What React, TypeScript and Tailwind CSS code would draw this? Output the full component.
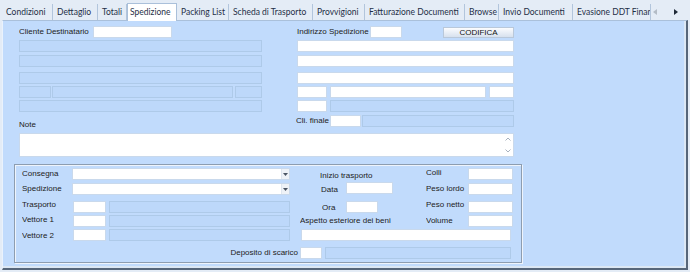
import React from 'react';

const tabs = [
  { label: 'Condizioni', w: 'w-[51px]' },
  { label: 'Dettaglio', w: 'w-[45px]' },
  { label: 'Totali', w: 'w-[29px]' },
  { label: 'Spedizione', w: 'w-[50px]', active: true },
  { label: 'Packing List', w: 'w-[52px]' },
  { label: 'Scheda di Trasporto', w: 'w-[84px]' },
  { label: 'Provvigioni', w: 'w-[52px]' },
  { label: 'Fatturazione Documenti', w: 'w-[100px]' },
  { label: 'Browse', w: 'w-[34px]' },
  { label: 'Invio Documenti', w: 'w-[74px]' },
  { label: 'Evasione DDT Finanzi', w: 'w-[78px]' },
];

// --- Small field helpers ---
const Input = ({ className = '' }: { className?: string }) => (
  <div className={`h-[12px] bg-white border border-[#c9d9ec] ${className}`}></div>
);

const Disabled = ({ className = '' }: { className?: string }) => (
  <div className={`h-[12px] bg-[#bdd8fa] border border-[#aecae9] ${className}`}></div>
);

const Label = ({ children, className = '' }: { children: React.ReactNode; className?: string }) => (
  <div className={`shrink-0 overflow-hidden whitespace-nowrap text-[8px] leading-[12px] text-[#222] ${className}`}>
    {children}
  </div>
);

const Combo = () => (
  <div className="h-[12px] w-[218px] bg-white border border-[#c9d9ec] flex justify-end">
    <div className="w-[8px] h-full bg-[#eef2f7] border-l border-[#dfe6ef] flex items-center justify-center">
      <svg width="5" height="3" viewBox="0 0 5 3">
        <path d="M0 0h5L2.5 3z" fill="#4b5563" />
      </svg>
    </div>
  </div>
);

export default function App() {
  return (
    <div
      className="w-[690px] h-[272px] bg-[#e4ecf6] overflow-hidden"
      style={{ fontFamily: '"Liberation Sans", Arial, sans-serif' }}
    >
      {/* ==========================
          TAB STRIP
      ========================== */}
      <div className="h-[20px] flex items-end pl-[2px] relative">
        {tabs.map((t) => (
          <div
            key={t.label}
            className={`${t.w} shrink-0 overflow-hidden whitespace-nowrap text-[8.5px] text-[#1f2f46] ${
              t.active
                ? 'h-[18px] -mb-px z-10 bg-white border border-b-0 border-[#aac0da] pl-[2px] leading-[16px]'
                : 'h-[16px] border-r border-[#b2c5dc] pl-[4px] leading-[16px]'
            }`}
            style={{ fontFamily: 'Lato, "Open Sans", sans-serif' }}
          >
            {t.label}
          </div>
        ))}
        <div className="flex items-center gap-[17px] h-[16px] ml-[2px]">
          <svg width="4" height="6" viewBox="0 0 4 6">
            <path d="M4 0v6L0 3z" fill="#b4bcc6" />
          </svg>
          <svg width="4" height="6" viewBox="0 0 4 6">
            <path d="M0 0v6l4-3z" fill="#1f2937" />
          </svg>
        </div>
      </div>

      {/* ==========================
          PANEL
      ========================== */}
      <div className="ml-[2px] w-[686px] h-[250px] bg-[#c1dbfc] border-t border-t-[#aac0da] border-l border-l-[#eaf2fc] border-r-2 border-r-[#56667a] border-b-2 border-b-[#56667a] shadow-[inset_-2px_-2px_0_#dbe7f4] pt-[5px]">
        {/* Top section: two columns */}
        <div className="flex">
          {/* Left column */}
          <div className="ml-[16px] w-[243px] flex flex-col">
            <div className="flex h-[12px]">
              <Label className="w-[74px]">Cliente Destinatario</Label>
              <Input className="w-[79px]" />
            </div>
            <Disabled className="mt-[2px] w-[243px]" />
            <Disabled className="mt-[3px] w-[243px]" />
            <Disabled className="mt-[5px] w-[243px]" />
            <div className="mt-[2px] flex">
              <Disabled className="w-[32px]" />
              <Disabled className="ml-[1px] w-[181px]" />
              <Disabled className="ml-[2px] w-[27px]" />
            </div>
            <Disabled className="mt-[2px] w-[243px]" />
          </div>

          {/* Right column */}
          <div className="ml-[35px] w-[217px] flex flex-col">
            <div className="flex h-[12px]">
              <Label className="w-[73px]">Indirizzo Spedizione</Label>
              <Input className="w-[32px]" />
              <button className="ml-[41px] mt-[1px] w-[71px] h-[11px] bg-gradient-to-b from-[#fbfcfe] to-[#d7e1ee] border border-[#b9c8da] text-[8px] leading-[9px] text-[#111]">
                CODIFICA
              </button>
            </div>
            <Input className="mt-[2px] w-[217px]" />
            <Input className="mt-[3px] w-[217px]" />
            <Input className="mt-[5px] w-[217px]" />
            <div className="mt-[2px] flex">
              <Input className="w-[30px]" />
              <Input className="ml-[3px] w-[156px]" />
              <Input className="ml-[3px] w-[25px]" />
            </div>
            <div className="mt-[2px] flex">
              <Input className="w-[30px]" />
              <Disabled className="ml-[3px] w-[184px]" />
            </div>
          </div>
        </div>

        {/* Note / Cli. finale */}
        <div className="mt-[3px] flex h-[18px]">
          <div className="ml-[16px] w-[243px]">
            <Label className="mt-[4px]">Note</Label>
          </div>
          <div className="ml-[34px] flex items-start">
            <Label className="w-[34px]">Cli. finale</Label>
            <Input className="w-[31px]" />
            <Disabled className="ml-[1px] w-[152px]" />
          </div>
        </div>

        {/* Note textarea */}
        <div className="ml-[16px] w-[495px] h-[24px] bg-white border border-[#c9d9ec] flex justify-end">
          <div className="w-[10px] h-full flex flex-col items-center justify-between py-[3px]">
            <svg width="6" height="4" viewBox="0 0 6 4">
              <path d="M0.5 3.5L3 1l2.5 2.5" stroke="#a8b2bf" fill="none" />
            </svg>
            <svg width="6" height="4" viewBox="0 0 6 4">
              <path d="M0.5 0.5L3 3l2.5-2.5" stroke="#a8b2bf" fill="none" />
            </svg>
          </div>
        </div>

        {/* ==========================
            GROUP BOX
        ========================== */}
        <div className="mt-[7px] ml-[11px] w-[508px] h-[99px] border border-[#8d9db0] shadow-[1px_1px_0_#eef4fc,inset_1px_1px_0_#eef4fc] pt-[3px] flex flex-col">
          {/* Row A */}
          <div className="flex h-[12px]">
            <Label className="ml-[7px] w-[50px]">Consegna</Label>
            <Combo />
            <Label className="ml-[30px] w-[60px] mt-[2px]">Inizio trasporto</Label>
            <Label className="ml-[46px] w-[42px] -mt-[1px]">Colli</Label>
            <Input className="w-[45px]" />
          </div>

          {/* Row B */}
          <div className="mt-[3px] flex h-[12px]">
            <Label className="ml-[7px] w-[50px]">Spedizione</Label>
            <Combo />
            <Label className="ml-[31px] w-[25px] mt-[1px]">Data</Label>
            <Input className="w-[47px] -mt-[1px]" />
            <Label className="ml-[33px] w-[42px]">Peso lordo</Label>
            <Input className="w-[45px]" />
          </div>

          {/* Row C */}
          <div className="mt-[6px] flex h-[12px]">
            <Label className="ml-[7px] w-[51px] -mt-[2px]">Trasporto</Label>
            <Input className="w-[33px]" />
            <Disabled className="ml-[3px] w-[181px]" />
            <Label className="ml-[32px] w-[24px] mt-[1px]">Ora</Label>
            <Input className="w-[32px]" />
            <Label className="ml-[48px] w-[42px] -mt-[2px]">Peso netto</Label>
            <Input className="w-[45px]" />
          </div>

          {/* Row D */}
          <div className="mt-[2px] flex h-[12px]">
            <Label className="ml-[7px] w-[51px] -mt-[1px]">Vettore 1</Label>
            <Input className="w-[33px]" />
            <Disabled className="ml-[3px] w-[181px]" />
            <Label className="ml-[10px] w-[126px]">Aspetto esteriore dei beni</Label>
            <Label className="w-[42px]">Volume</Label>
            <Input className="w-[45px]" />
          </div>

          {/* Row E */}
          <div className="mt-[2px] flex h-[12px]">
            <Label className="ml-[7px] w-[51px] mt-[1px]">Vettore 2</Label>
            <Input className="w-[33px]" />
            <Disabled className="ml-[3px] w-[181px]" />
            <Input className="ml-[11px] w-[210px]" />
          </div>

          {/* Row F */}
          <div className="mt-[6px] flex h-[12px]">
            <Label className="ml-[7px] w-[277px] text-right pr-[1px]">Deposito di scarico</Label>
            <Input className="ml-[1px] w-[22px]" />
            <Disabled className="ml-[3px] w-[186px]" />
          </div>
        </div>
      </div>
    </div>
  );
}
